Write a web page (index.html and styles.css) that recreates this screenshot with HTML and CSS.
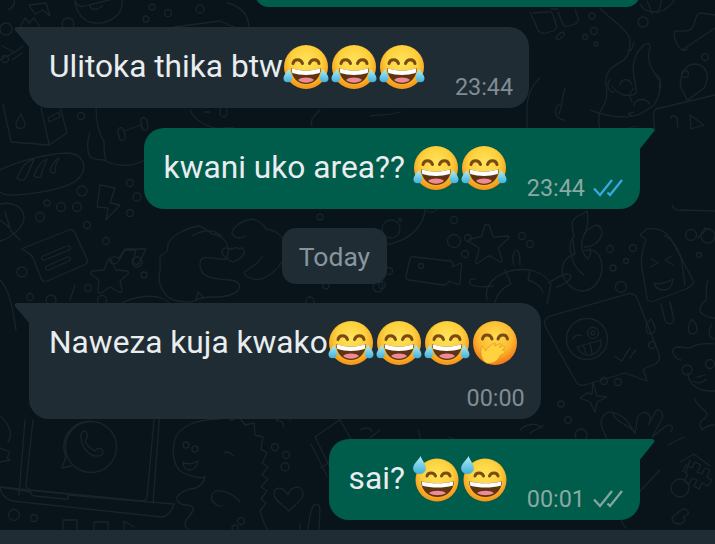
FILE: index.html
```html
<!DOCTYPE html>
<html lang="en">
<head>
    <meta charset="UTF-8">
    <meta name="viewport" content="width=device-width, initial-scale=1.0">
    <title>Chat</title>
    <link rel="stylesheet" href="styles.css">
</head>
<body>
    <svg class="defs" width="0" height="0">
        <defs>
            <radialGradient id="face" cx="50%" cy="38%" r="58%">
                <stop offset="0" stop-color="#ffe45c"/>
                <stop offset="0.6" stop-color="#fdd03c"/>
                <stop offset="1" stop-color="#f59a1c"/>
            </radialGradient>
            <radialGradient id="faceBlush" cx="50%" cy="35%" r="60%">
                <stop offset="0" stop-color="#ffdc50"/>
                <stop offset="0.65" stop-color="#fdb92f"/>
                <stop offset="1" stop-color="#f5801c"/>
            </radialGradient>
            <linearGradient id="tear" x1="0" y1="0" x2="0" y2="1">
                <stop offset="0" stop-color="#b5eef2"/>
                <stop offset="1" stop-color="#3fb0dd"/>
            </linearGradient>
            <symbol id="joy" viewBox="0 0 46 46">
                <circle cx="23" cy="23" r="22" fill="url(#face)"/>
                <path d="M10 19.500c1-5 8-5 9.500 0" fill="none" stroke="#7a4a14" stroke-width="3" stroke-linecap="round"/>
                <path d="M26.500 19.500c1.500-5 8.500-5 9.500 0" fill="none" stroke="#7a4a14" stroke-width="3" stroke-linecap="round"/>
                <path d="M8 24c10 3.500 20 3.500 30 0-.5 10.500-7.500 16-15 16S8.500 34.500 8 24z" fill="#5f3410"/>
                <path d="M8.500 24.200c9.500 3.300 19.500 3.300 29 0l-.8 4.800c-8.500 2.600-19 2.600-27.400 0z" fill="#fff"/>
                <path d="M15 36c4-3.200 12-3.200 16 0-4.500 3.500-11.500 3.500-16 0z" fill="#f08a98"/>
                <path d="M6 25c-1.500 2.500-5.500 5.500-5.500 9.500 0 2.800 2.500 4 4.700 3.800 2.800-.3 4.300-2.500 4-5C9 30.500 7.300 27.500 6 25z" fill="url(#tear)"/>
                <path d="M40 25c1.500 2.500 5.500 5.500 5.500 9.500 0 2.800-2.500 4-4.700 3.800-2.800-.3-4.300-2.500-4-5 .2-2.800 1.900-5.800 3.200-8.300z" fill="url(#tear)"/>
            </symbol>
            <symbol id="sweat" viewBox="0 0 46 46">
                <circle cx="24" cy="24" r="21.500" fill="url(#face)"/>
                <path d="M14 20c1-4 7-4 8.500 0" fill="none" stroke="#7a4a14" stroke-width="3" stroke-linecap="round"/>
                <path d="M28.500 20c1.500-4 7.500-4 8.500 0" fill="none" stroke="#7a4a14" stroke-width="3" stroke-linecap="round"/>
                <path d="M8 25c10 3 23 3 33 0-.5 10.500-8.500 16-16.500 16S8.500 35.500 8 25z" fill="#5f3410"/>
                <path d="M8.500 25.200c10 2.800 22 2.800 32 0l-.8 4.500c-9 2.400-21.400 2.400-30.400 0z" fill="#fff"/>
                <path d="M16 37c4-3 13-3 17 0-4.500 3-12.500 3-17 0z" fill="#f08a98"/>
                <path d="M7.500 0C6 4-.5 8 .2 13c.5 3.500 3.800 5.300 7 5 3.700-.3 6-3.200 5.600-6.500C12.300 7.500 9 4 7.500 0z" fill="url(#tear)"/>
            </symbol>
            <symbol id="blush" viewBox="0 0 46 46">
                <circle cx="23" cy="23" r="22" fill="url(#faceBlush)"/>
                <path d="M10.500 19c1-5.500 8-5.500 9.500 0" fill="none" stroke="#7a4a14" stroke-width="3" stroke-linecap="round"/>
                <path d="M26 19c1.500-5.500 8.500-5.500 9.500 0" fill="none" stroke="#7a4a14" stroke-width="3" stroke-linecap="round"/>
                <path d="M12 41c-3-4-4-10-2-15 1 1 2.500 3 3.500 5 2-3 6-7 9-8 1.500 0 1 1.500-.5 2.500l1 .5c3-1.500 5-3 6-2 1 1 0 2-2 3.500 2.500-1 4.500-2 5.500-1 1 1-.5 2.500-2.500 3.500 2 0 3 .5 3 1.500 0 1.500-3 3-5 4-1.500 4-5 7-8 7.500-3 .5-6.500.5-8-2z" fill="#ffd23f" stroke="#e89a1e" stroke-width="0.800"/>
            </symbol>
            <symbol id="dticks" viewBox="0 0 30 20">
                <path d="M1 10.500l6 6.500L19 2M14.500 14.500l2.500 2.500L29 2" fill="none" stroke="currentColor" stroke-width="2.300"/>
            </symbol>
        </defs>
    </svg>

    <div class="phone">
        <svg class="wallpaper" width="715" height="530" viewBox="0 0 715 530" fill="none">
            <!-- top left -->
            <path d="M14 0c2 4-2 8-6 10M29 5l17-2 4 13-7-6-8 4z"/>
            <path d="M75 0c1 6 6 8 14 5l24-6M89 5c2 5 9 6 13 0M122 0c2 14-12 24-26 23-12 0-20-10-21-22"/>
            <circle cx="152" cy="7" r="3"/><circle cx="168" cy="13" r="3.500"/><circle cx="146" cy="19" r="3"/><circle cx="200" cy="9" r="4"/>
            <path d="M227 3c14 3 21 11 22 24"/>
            <circle cx="6" cy="29" r="6"/><circle cx="68" cy="24" r="6"/>
            <path d="M20 27l5-9 4 5 5-5 7 10"/>
            <path d="M0 60l15-8 8-6M2 46l12 6M12 60l10-7"/>
            <circle cx="5" cy="59" r="3.500"/>
            <path d="M174 27l46-6 14 6"/>

            <!-- strip between first bubbles -->
            <path d="M3 104l8 38 38 3 18-12-8-30M41 108l8 36"/>
            <path d="M21 114c-2 4-5 7-5 10 0 6 9 6 9 0 0-3-3-6-4-10z"/>
            <path d="M48 118l11-6 1 5-11 5z"/>
            <circle cx="81" cy="116" r="3.500"/>
            <path d="M190 110c4 10 20 20 34 18h10"/>
            <path d="M210 112h-6M224 107c-5 0-6 9 0 10 2 0 3-2 3-5s-1-5-3-5z"/>
            <path d="M320 110c-8 8-10 10-8 16M400 112c-10 4-20 2-30 4"/>

            <!-- bread, bolt, bag -->
            <path d="M0 170c20-10 48-16 66-17 18 0 22 14 13 25-8 9-34 15-64 17-7 .5-12-.5-15-3"/>
            <path d="M17 178c4-8 8-17 17-19-3 8-7 16-9 20-1 2-5 2-8-1zM34 176c2-6 6-14 13-17-3 8-6 14-6 17-1 2-5 2-7 0zM50 171c1-5 5-11 9-13-3 5-4 11-4 14-1 2-4 1-5-1z"/>
            <path d="M90 133c-3 6-3 16-1 22 2 4 8 5 15 5 10 6 26 8 41 0"/>
            <path d="M96 108c0 10 1 22 8 34 M104 142c0 6 0 14 2 18"/>
            <path d="M118 132c-1-5 5-6 6-1l1 5c1 5-5 6-6 1zM141 122c-1-5 5-6 6-1l1 5c1 5-5 6-6 1zM124 131l17-6"/>
            <path d="M100 185l15 3-5 15 10 2-14 15 2-12-11-1z"/>
            <circle cx="82" cy="191" r="5"/><circle cx="61" cy="207" r="4.500"/><circle cx="77" cy="207" r="4.500"/><circle cx="47" cy="203" r="3"/><circle cx="40" cy="217" r="4.500"/><circle cx="87" cy="225" r="3.500"/>
            <circle cx="130" cy="183" r="3.500"/><circle cx="137" cy="197" r="4"/><circle cx="130" cy="213" r="3.500"/><circle cx="106" cy="241" r="3.500"/><circle cx="137" cy="262" r="5"/><circle cx="144" cy="275" r="3"/><circle cx="22" cy="272" r="5"/><circle cx="30" cy="297" r="3.500"/><circle cx="88" cy="288" r="3.500"/><circle cx="102" cy="300" r="4.500"/><circle cx="51" cy="300" r="5"/>
            <path d="M0 204c14-3 24 4 24 14 0 8-12 20-24 23M0 220l10 8M5 212l5 16M10 230l10 10"/>

            <!-- note card -->
            <path d="M21 249l48-19c3-1 5 0 6 3l12 26c1 3 0 5-3 6l-37 16c-3 1-5 0-6-3l-8-20c-1-3-7-7-12-9z"/>
            <path d="M43 256l24-10c3-1 5 3 2 4l-24 10c-3 1-5-3-2-4zM47 266l20-9c3-1 5 3 2 4l-20 9c-3 1-5-3-2-4z"/>
            <path d="M125 249h21l-6 12c-1 5-7 4-7 0l3-11h-11l-7 12c-2 3-9 2-8-2 1-3 5-4 9-2z"/>

            <!-- star, heart hands -->
            <path d="M111 260l5 10 11 1c1 0 2 2 1 3l-8 7 2 9c0 2-1 3-3 2l-9-5-9 6c-2 1-3 0-3-2l1-11-8-6c-1-1 0-3 2-3l11-1 4-10c1-2 2-2 3 0z"/>
            <path d="M160 256c8-4 8-6 8-12 4-10 20-16 30-18 4 0 10 5 14 8 10 1 16 8 16 16 0 12-4 9-6 9-12 0-22-6-22 6 0 14 16 14 30 15 8 1 12 5 8 10-3 4-12 7-24 7-8 0-15 1-20 4-4 3-12 0-16 0-12-1-22-16-18-30z"/>
            <path d="M192 236c10-6 20-8 30 0"/>
            <path d="M233 249c4-3 5 0 5 0 4-3 7 1 6 4-1 4-4 6-11 9-7-3-10-6-11-9-1-3 3-7 6-4 2 0 4 0 5 0z"/>
            <path d="M232 234c0-6 8-13 20-15 8 2 12 6 14 10 10 1 20 8 20 20 0 8-6 20-20 28-10 6-20 0-22-4 2-4 12-6 18-16"/>
            <path d="M232 234c3 3 8 6 14 2"/>

            <!-- lower left -->
            <path d="M0 280c8 8 12 22 16 50"/>
            <path d="M70 300l5-15M122 303c12-6 24-8 36-6 6 2 10 4 12 7"/>
            <path d="M196 300l2-8 6 6"/>
            <circle cx="320" cy="217" r="3"/>
            <circle cx="310" cy="301" r="4"/>
            <circle cx="326" cy="286" r="3"/>
            <circle cx="378" cy="287" r="5"/>

            <!-- laptop -->
            <path d="M25 420l-6 75M33 420l-7 65c0 3 2 4 4 5l112 11c3 0 4-1 5-4l7-77M160 410l-7 93"/>
            <path d="M0 487c1 8 6 12 12 14l150 16c4 0 10-5 12-13l-106-9c1 4 0 5-3 4l-30-3c-3 0-4-2-4-4z"/>
            <path d="M0 487l68 7"/>
            <circle cx="91" cy="447" r="25.500"/>
            <path d="M71 466l-9 2 4-11c-8-20 8-36 25-36"/>
            <path d="M81 438c-1-4 1-7 4-7 2 0 3 6 2 7l-2 3c2 5 6 8 10 10l2-2c2-2 6 0 6 3 0 3-3 4-6 4-8 0-15-8-16-18z"/>
            <circle cx="14" cy="515" r="5.500"/><circle cx="34" cy="518" r="3.500"/>
            <path d="M63 530v-10h14v10M94 530v-8h14v8M124 530v-9l10 6"/>
            <path d="M0 416c8 6 14 18 8 26M0 448l10 4-3 6 3 2-10 2"/>

            <!-- dino -->
            <path d="M205 477c-8 2-16-1-25-6-6-6-8-18-6-28 2-14 18-24 46-24l6-6 5 8 8-4 6 8 9-2 1 12 8 2-2 12 6 4-5 10 6 4-6 8 6 4-7 8 6 4-6 8 5 4-6 8 4 12c2 6 6 10 12 12 6 2 16 2 22-4"/>
            <path d="M205 477c-1 5-3 8-9 11-8 1-16 4-19 9-1 4 3 8 9 8 5 0 8 2 7 5-1 5-7 8-8 13 0 4 1 5 4 7"/>
            <path d="M240 502c-6-8-16-12-24-11-5 2-6 8-2 12 2 2 5 4 8 3"/>
            <circle cx="186" cy="445" r="3"/><circle cx="195" cy="449" r="3"/>
            <path d="M183 462c5 3 10 2 15-1-1 6-4 9-9 9-4 0-6-4-6-8z"/>
            <path d="M224 453c3-2 6-1 9 3"/>
            <circle cx="241" cy="521" r="3.500"/><circle cx="275" cy="447" r="3.500"/><circle cx="286" cy="455" r="3.500"/><circle cx="285" cy="467" r="4"/>
            <path d="M288 495c-6-10-14-8-14-1 0 6 8 10 15 17 6-6 15-12 14-18-1-8-12-8-15 2z"/>
            <path d="M315 437l33-23M315 437l16 32c2 2 4 3 8 2l10-2M311 444l16 32M340 420l14 24M320 468l20-12"/>
            <path d="M308 530c1-10 2-20 6-25 3-2 6 0 6 4l-1 21M300 530v-6"/>
            <path d="M284 427l-2-5-6-2 6-3 1-6 4 5 6-1-3 5"/>

            <!-- middle right: sun, camera, starfish, turtle -->
            <path d="M424 205c4 10-6 36-41 40"/>
            <circle cx="391" cy="229" r="9"/>
            <circle cx="400" cy="220" r="1.500"/>
            <circle cx="454" cy="220" r="3.500"/><circle cx="454" cy="241" r="6.500"/><circle cx="468" cy="238" r="3.500"/><circle cx="465" cy="254" r="3.500"/><circle cx="522" cy="236" r="3.500"/><circle cx="530" cy="244" r="3.500"/>
            <circle cx="389" cy="271" r="3.500"/><circle cx="382" cy="285" r="3.500"/>
            <path d="M421 205c3 4 5 8 12 7l12-7"/>
            <path d="M414 257l36 4c2 0 3 2 3 4l-1 2 9-4c1 2 1 4 0 6l-1 14c0 1-1 2-3 1l-8-3c-1 3-3 4-6 4l-34-5c-2 0-3-2-3-4l4-17c0-2 2-3 4-2z"/>
            <circle cx="421" cy="266" r="2.500"/>
            <path d="M489 225l4 11c0 1 1 1 2 1l12-1c2 0 3 1 1 3l-9 8c-1 1-1 2 0 3l3 10c0 2-1 3-2 2l-10-6c-1 0-2 0-3 1l-9 6c-2 1-3 0-2-2l3-11c0-1 0-2-1-3l-9-5c-2-1-1-2 1-3l10-2c1 0 2-1 2-2l3-10c1-1 2-1 3 0z"/>
            <path d="M514 265c-3-7 0-14 3-15 3 2 3 8 3 15"/>
            <path d="M487 300c-3-14 6-26 28-30 14-2 30 2 36 14l-4 20"/>
            <path d="M505 270l6 14c-10 4-14 10-16 18M530 270l-2 10c8 2 14 8 15 12"/>
            <path d="M475 279c-5-1-8 4-3 6 5 2 14 2 21 1"/>
            <path d="M548 283c5-2 12-8 18-9 5-1 6 3 3 6-2 2-6 5-12 7"/>

            <!-- fruit, popsicle, wink card -->
            <path d="M572 255c-4-6-2-14 2-19-4-14-2-18 8-22 2-1 4-2 5-3 2 10 0 18-3 24-4 8-3 18 4 24 3-4 3-6 2-10"/>
            <path d="M573 240c0 6 1 10 2 14-8 2-12 8-13 15 0 10 8 21 20 22 12 0 20-12 20-24 0-12-8-20-18-16"/>
            <path d="M572 255c0 8 6 16 12 20M584 247c8 0 16-4 18-14 0-3-2-8-6-8-4 2-10 4-12 10"/>
            <path d="M646 240c-2-4-5-3-6-5 1-2 5-3 6-6 8-1 20 0 26 12l22 41c-1 3-4 5-8 7l-32 12c-3 1-6 0-7-2l-4-25c-2-8-3-20 3-34z"/>
            <path d="M664 235c8 4 14 14 17 22l4 28"/>
            <path d="M650 267l8-4-7-4M672 256l-7 4 8 5M654 283c6 2 14-1 19-4-1 7-4 11-9 11-6 0-9-3-10-7z"/>
            <path d="M661 304l4 16c1 4 6 5 8 2 1-2 1-4 0-6l-3-14"/>
            <path d="M651 319c-4 3-6 8-4 13 2 3 8 2 8-3 0-4-2-7-4-10zM692 319c-3 5-5 9-3 13 2 3 8 2 8-2 0-4-2-8-5-11zM712 324c-3 5-4 9-2 13l4 2"/>
            <circle cx="652" cy="345" r="3.500"/>
            <circle cx="610" cy="249" r="3.500"/><circle cx="633" cy="248" r="3.500"/><circle cx="626" cy="261" r="2.500"/><circle cx="613" cy="268" r="3"/><circle cx="621" cy="287" r="5.500"/>
            <path d="M550 316l77-22c5-1 8 0 10 4l22 56c2 5-1 9-6 11l-10 4 4 12-22-8-40 12c-5 1-8 0-10-5l-30-54c-2-4 0-8 5-10z"/>
            <circle cx="587" cy="339" r="20.500"/>
            <circle cx="593" cy="333" r="5.500"/><circle cx="593" cy="333" r="2"/>
            <path d="M573 339c2-4 5-5 9-3M577 347l24-7c1 8-4 14-10 15-6 1-11-2-14-8zM583 345l3 8M590 343l2 10"/>
            <path d="M614 356c3 2 6 4 8 5M622 361c2-4 5-9 8-13M630 358c2-3 4-6 6-8"/>
            <circle cx="604" cy="381" r="3.500"/><circle cx="618" cy="382" r="3.500"/>
            <path d="M587 393l5 1 1-12 4 14 10 1-10 5-2 10-5-10-10-4z"/>
            <circle cx="561" cy="404" r="3"/><circle cx="568" cy="420" r="3.500"/><circle cx="581" cy="435" r="6"/>
            <path d="M607 439c-4-10-10-16-2-25 4-4 12-1 16 2 8 4 10 12 14 17l2-12c0-8 10-12 13-4 1 2 0 6-2 8l8-14c4-3 8 2 6 8l-10 18c2 0 14-14 18-12 4 2 2 6 0 7"/>
            <path d="M635 433c-4-8-20-10-22-20"/>

            <!-- cat -->
            <path d="M681 360c-4 0-6-3-8-7-1-5 2-6 5-6l12 1c6-4 14-5 24-4M688 373c0 8 6 14 14 17 4 1 10 1 13 1"/>
            <circle cx="687" cy="370" r="5"/>
            <circle cx="710" cy="364" r="4.500"/>
            <path d="M697 377c3-1 6-1 8-2M693 381c5 3 10 2 13-2"/>
            <path d="M694 398c2 6 8 10 12 14 3 4-2 7-5 9-3 4 0 8 2 8"/>
            <path d="M702 430c4-4 8-5 12-5"/>
            <path d="M708 280c-4 10 0 16-2 20-2 2-6 4-6 10 0 4 8 8 15 8"/>
            <path d="M698 238l7-7M704 228l6 1"/>
            <circle cx="699" cy="255" r="2.500"/>
            <circle cx="691" cy="235" r="5.500"/>
            <circle cx="708" cy="236" r="7"/>
            <path d="M672 205c1 4 6 6 10 5l33 1"/>

            <!-- top right: glasses, tentacle, pin -->
            <path d="M530 12l8 18c2 3 5 4 8 3l7-2c3-1 4-4 3-7l-3-9c-1-3-3-4-6-3l-14 1M558 12l4 10c1 4 4 5 7 4l6-2c3-1 4-3 3-6l-3-9"/>
            <path d="M551 9l7 0"/>
            <path d="M562 37c3-1 3-4 1-5-4 1-7 4-7 7 2 1 4 0 6-2z"/>
            <circle cx="592" cy="16" r="3"/><circle cx="594" cy="31" r="3.500"/><circle cx="585" cy="37" r="2.500"/><circle cx="596" cy="44" r="2"/>
            <path d="M540 78c-8 6-13 20-13 30 M527 108v20"/>
            <path d="M565 88c-3 10-3 18-6 26"/>
            <path d="M560 104c-5 2-6 10-2 13 2 2 4 3 6 3"/>
            <path d="M600 8c8 10 22 16 30 30 0 10 0 16-6 22-10 6-20 10-18 26 2 12 0 16-6 26 -2 6-2 10 0 18"/>
            <path d="M612 86c4 6 8 8 12 9 14 2 14-2 10-18-2-12 0-24 10-32 4-2 6-2 6 2-4 14 0 20 10 34 2 6-2 18-6 24-8 6-16 12-30 12-16 0-26-4-34-7"/>
            <path d="M628 50c4 2 4-2 6-8M620 85c2-8 10-6 12 0M657 75c2 2 4 2 2 14M610 80c-4 4-2 12 4 12M634 106c0-6 10-10 16-2"/>
            <path d="M634 88c-4 4-6 8-2 14"/>
            <circle cx="643" cy="22" r="5"/>
            <path d="M640 4c4 8 14 10 24 6 5-3 8-6 10-10M647 1c2 4 4 8 5 13M661 0c0 4-1 9-4 13"/>
            <path d="M675 31c10 0 18 2 20-10 1-4 2-8 6-8l14 2M682 50l33-22M675 31c-2 4 0 12 4 16 2 4 6 4 8 2"/>
            <circle cx="705" cy="57" r="3.500"/>
            <path d="M684 93c-8-8-2-28 10-29 14 0 16 14 10 24l-16 12c-1 1-2-2-4-7z"/>
            <circle cx="685" cy="74" r="3.500"/>
            <path d="M656 109l59-14M656 109c-4 3-2 16-1 22M671 118c0-3 5-3 6 0l1 10M690 115l14 10-13 4z"/>
            <path d="M632 116c-6-3-4-2 2-4M636 126l-10 3"/>

            <!-- lower middle -->
            <path d="M505 459c8 0 16 6 20 14M418 430c4 6 2 22 8 30M448 437l24 8"/>
            <path d="M360 430c4-2 10-4 12 2M380 430l-10 8"/>
            <path d="M520 430c6-6 16-8 22-2M544 425l-14 8"/>
            <path d="M660 470l-36 38c-6 6-4 14 2 20M680 462l14-8 16 12"/>
            <path d="M668 445l16-8M690 460l-4 12"/>
            <path d="M695 462l6 3-4 7 5 2 3-6 5 2-3 7 5 3-4 6-6-3-3 6-5-3 3-6-5-2-3 6-5-3 4-7-5-3 3-6 6 3z"/>
            <circle cx="680" cy="488" r="9"/>
            <path d="M675 515c-4 2-4 6 0 8l4 1c4 0 8-4 4-7l4-2c3-3 0-7-4-6z"/>
            <circle cx="235" cy="528" r="3"/>
        </svg>

        <main class="chat">
            <div class="bubble out stub"></div>

            <div class="bubble in row wide-gap">
                <svg class="tail tail-left" width="16" height="22" viewBox="0 0 16 22"><path d="M16 0H3C.8 0 0 2 1.200 3.500L16 21z"/></svg>
                <p class="text">Ulitoka thika btw<svg class="emoji"><use href="#joy"/></svg><svg class="emoji"><use href="#joy"/></svg><svg class="emoji"><use href="#joy"/></svg></p>
                <div class="meta"><span class="time">23:44</span></div>
            </div>

            <div class="bubble out row">
                <svg class="tail tail-right" width="16" height="23" viewBox="0 0 16 23"><path d="M0 0h13c2.200 0 3.200 2 1.800 3.500L0 22z"/></svg>
                <p class="text">kwani uko area?? <svg class="emoji"><use href="#joy"/></svg><svg class="emoji"><use href="#joy"/></svg></p>
                <div class="meta"><span class="time">23:44</span><svg class="ticks read"><use href="#dticks"/></svg></div>
            </div>

            <div class="day-chip">Today</div>

            <div class="bubble in column">
                <svg class="tail tail-left" width="16" height="22" viewBox="0 0 16 22"><path d="M16 0H3C.8 0 0 2 1.200 3.500L16 21z"/></svg>
                <p class="text">Naweza kuja kwako<svg class="emoji"><use href="#joy"/></svg><svg class="emoji"><use href="#joy"/></svg><svg class="emoji"><use href="#joy"/></svg><svg class="emoji"><use href="#blush"/></svg></p>
                <div class="meta"><span class="time">00:00</span></div>
            </div>

            <div class="bubble out row">
                <svg class="tail tail-right" width="16" height="23" viewBox="0 0 16 23"><path d="M0 0h13c2.200 0 3.200 2 1.800 3.500L0 22z"/></svg>
                <p class="text">sai? <svg class="emoji"><use href="#sweat"/></svg><svg class="emoji"><use href="#sweat"/></svg></p>
                <div class="meta"><span class="time">00:01</span><svg class="ticks"><use href="#dticks"/></svg></div>
            </div>
        </main>

        <div class="input-bar"></div>
    </div>
</body>
</html>
```

FILE: styles.css
```css
body {
    margin: 0;
    background-color: #08141a;
    font-family: Roboto, "Noto Sans", sans-serif;
}
.defs {
    display: block;
    height: 0;
}
.phone {
    position: relative;
    width: 715px;
    height: 544px;
    overflow: hidden;
    display: flex;
    flex-direction: column;
}
.wallpaper {
    position: absolute;
    top: 0;
    left: 0;
    stroke: #17242b;
    stroke-width: 1.3;
    stroke-linecap: round;
    stroke-linejoin: round;
}
.chat {
    position: relative;
    height: 530px;
    flex: none;
    display: flex;
    flex-direction: column;
    padding-right: 75px;
    padding-left: 29px;
    box-sizing: border-box;
}
.input-bar {
    height: 14px;
    flex: none;
    background-color: #1f2c34;
}

.bubble {
    position: relative;
    flex: none;
    box-sizing: border-box;
    border-radius: 20px;
    margin-bottom: 20px;
}
.bubble.in {
    align-self: flex-start;
    background-color: #202c33;
    border-top-left-radius: 0;
}
.bubble.out {
    align-self: flex-end;
    background-color: #005c4b;
    border-top-right-radius: 0;
}
.bubble.stub {
    width: 385px;
    height: 27px;
    margin-top: -20px;
}
.bubble.row {
    display: flex;
    align-items: flex-end;
    gap: 20px;
    height: 81px;
    padding: 17px 17px 0 20px;
}
.bubble.wide-gap {
    gap: 30px;
    padding-right: 16px;
}
.bubble.column {
    display: flex;
    flex-direction: column;
    height: 116px;
    padding: 17px 23px 0 20px;
}
.bubble.column .meta {
    align-self: flex-end;
    margin-top: 19px;
    margin-right: -7px;
}

.tail {
    position: absolute;
    top: 0;
}
.tail-left {
    left: -15px;
    fill: #202c33;
}
.tail-right {
    right: -15px;
    fill: #005c4b;
}

.text {
    margin: 0;
    align-self: flex-start;
    color: #e9edef;
    font-size: 31.7px;
    line-height: 46px;
    white-space: nowrap;
}
.emoji {
    display: inline-block;
    width: 46px;
    height: 46px;
    margin-right: 2px;
    vertical-align: top;
}
.emoji:last-child {
    margin-right: 0;
}
.meta {
    display: flex;
    align-items: center;
    gap: 8px;
    height: 26px;
    margin-bottom: 8px;
}
.time {
    color: #7f8d96;
    font-size: 23.4px;
}
.bubble.out .time {
    color: #8ba9a2;
}
.ticks {
    width: 30px;
    height: 20px;
    color: #84a59d;
}
.ticks.read {
    color: #38a9dd;
}

.day-chip {
    flex: none;
    align-self: center;
    margin: -1px 0 19px;
    width: 105px;
    height: 56px;
    border-radius: 14px;
    background-color: #202c33;
    color: #8696a0;
    font-size: 26.5px;
    display: flex;
    align-items: center;
    justify-content: center;
}
```
